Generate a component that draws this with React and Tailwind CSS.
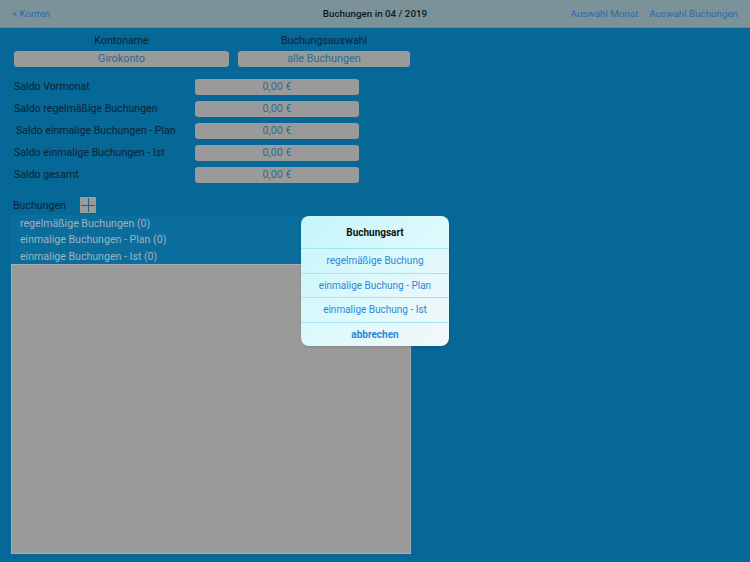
import React from 'react';

const saldi = [
  { label: 'Saldo Vormonat' },
  { label: 'Saldo regelmäßige Buchungen' },
  { label: 'Saldo einmalige Buchungen - Plan', indent: true },
  { label: 'Saldo einmalige Buchungen - Ist' },
  { label: 'Saldo gesamt' },
];

const lists = [
  'regelmäßige Buchungen (0)',
  'einmalige Buchungen - Plan (0)',
  'einmalige Buchungen - Ist (0)',
];

const actions = [
  { label: 'regelmäßige Buchung' },
  { label: 'einmalige Buchung - Plan' },
  { label: 'einmalige Buchung - Ist' },
  { label: 'abbrechen', bold: true },
];

function Field({ children, className = '' }) {
  return (
    <div className={`h-[16px] rounded-[3px] bg-[#9a9a9a] text-[#2d6b93] text-[10.8px] leading-[16px] text-center ${className}`}>
      {children}
    </div>
  );
}

export default function App() {
  return (
    <div
      className="relative w-[750px] h-[562px] overflow-hidden bg-[#066896] text-[10.6px]"
      style={{ fontFamily: 'Roboto, "Liberation Sans", Arial, sans-serif' }}
    >
      {/* Navigation bar (dimmed) */}
      <div className="h-[28px] pt-[1px] bg-[#7b9398] border-b border-[#6a8388] flex items-center px-[12px] text-[9.8px]">
        <div className="w-[200px] text-[#2f68ac]">&lt; Konten</div>
        <div className="flex-1 text-center font-medium text-[#101a1e]">Buchungen in 04 / 2019</div>
        <div className="w-[200px] flex justify-end gap-[11px] text-[#2f68ac]">
          <span>Auswahl Monat</span>
          <span>Auswahl Buchungen</span>
        </div>
      </div>

      {/* Konto + Auswahl */}
      <div className="flex gap-[9px] pl-[14px] pt-[6px]">
        <div className="w-[215px]">
          <div className="text-center text-[#0d2231] leading-[14px] mb-[3px]">Kontoname</div>
          <Field>Girokonto</Field>
        </div>
        <div className="w-[172px]">
          <div className="text-center text-[#0d2231] leading-[14px] mb-[3px]">Buchungsauswahl</div>
          <Field>alle Buchungen</Field>
        </div>
      </div>

      {/* Saldi */}
      <div className="flex flex-col gap-[6px] pl-[14px] pt-[11px]">
        {saldi.map((s) => (
          <div key={s.label} className="flex items-center h-[16px] pt-[1px]">
            <div className={`w-[181px] text-[#0d2231] ${s.indent ? 'pl-[2px]' : ''}`}>{s.label}</div>
            <Field className="w-[164px]">0,00 €</Field>
          </div>
        ))}
      </div>

      {/* Buchungen */}
      <div className="flex items-center gap-[14px] pl-[13px] mt-[15px] h-[16px]">
        <span className="text-[#0d2231] pt-[1px]">Buchungen</span>
        <div className="w-[16px] h-[16px] bg-[#9a9a9a] flex items-center justify-center">
          <svg width="16" height="16" viewBox="0 0 16 16" shapeRendering="crispEdges">
            <path d="M8 1V15M1 8H15" stroke="#215f8c" strokeWidth="1" />
          </svg>
        </div>
      </div>

      <div className="ml-[11px] mt-[2px] w-[400px]">
        <div className="bg-[#0a6d9c] h-[49px] pt-[1px]">
          {lists.map((l) => (
            <div key={l} className="pl-[9px] h-[16.4px] leading-[16px] text-[#a4b1ba]">{l}</div>
          ))}
        </div>
        <div className="h-[290px] bg-[#9a9a9a] border border-[#a8aeb2]" />
      </div>

      {/* Action sheet */}
      <div className="absolute left-[301px] top-[216px] w-[148px] rounded-[8px] overflow-hidden bg-gradient-to-br from-[#c4f5fa] via-[#dcf9fc] to-[#f4f7f9] shadow-sm">
        <div className="h-[32px] flex items-center justify-center font-bold text-[10px] text-[#111]">Buchungsart</div>
        {actions.map((a) => (
          <div
            key={a.label}
            className={`h-[24.5px] flex items-center justify-center border-t border-[#a4e6ef] text-[10px] text-[#2f86d8] ${a.bold ? 'font-bold' : ''}`}
          >
            {a.label}
          </div>
        ))}
      </div>
    </div>
  );
}
